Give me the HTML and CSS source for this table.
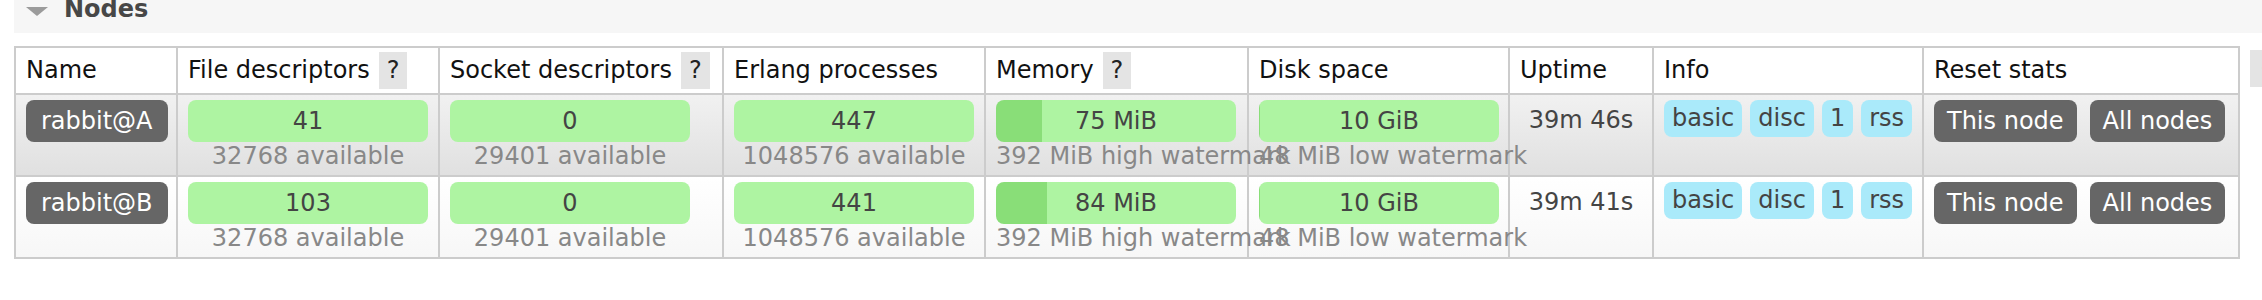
FILE: index.html
```html
<!DOCTYPE html>
<html>
<head>
<meta charset="utf-8">
<title>Nodes</title>
<link rel="stylesheet" href="styles.css">
</head>
<body>
<div class="page">
  <div class="section-head">
    <svg class="tri" width="22" height="9" viewBox="0 0 22 9"><polygon points="0,0 22,0 11,9" fill="#9b9b9b"/></svg>
    <h2>Nodes</h2>
  </div>
  <div class="table-row">
    <table class="list">
      <colgroup>
        <col class="c-name"><col class="c-fd"><col class="c-sd"><col class="c-ep"><col class="c-mem"><col class="c-disk"><col class="c-up"><col class="c-info"><col class="c-reset">
      </colgroup>
      <thead>
        <tr>
          <th>Name</th>
          <th>File descriptors<span class="help">?</span></th>
          <th>Socket descriptors<span class="help">?</span></th>
          <th>Erlang processes</th>
          <th>Memory<span class="help">?</span></th>
          <th>Disk space</th>
          <th>Uptime</th>
          <th>Info</th>
          <th>Reset stats</th>
        </tr>
      </thead>
      <tbody>
        <tr class="alt1">
          <td><span class="node">rabbit@A</span></td>
          <td><div class="meter"><div class="bar" style="--fill:0%">41</div><div class="sub">32768 available</div></div></td>
          <td><div class="meter"><div class="bar" style="--fill:0%">0</div><div class="sub">29401 available</div></div></td>
          <td><div class="meter"><div class="bar" style="--fill:0%">447</div><div class="sub">1048576 available</div></div></td>
          <td><div class="meter"><div class="bar" style="--fill:19.1%">75 MiB</div><div class="sub">392 MiB high watermark</div></div></td>
          <td><div class="meter"><div class="bar" style="--fill:0.5%">10 GiB</div><div class="sub">48 MiB low watermark</div></div></td>
          <td class="uptime">39m 46s</td>
          <td><div class="tags"><span class="tag">basic</span><span class="tag">disc</span><span class="tag">1</span><span class="tag">rss</span></div></td>
          <td><div class="btns"><span class="btn">This node</span><span class="btn">All nodes</span></div></td>
        </tr>
        <tr class="alt2">
          <td><span class="node">rabbit@B</span></td>
          <td><div class="meter"><div class="bar" style="--fill:0%">103</div><div class="sub">32768 available</div></div></td>
          <td><div class="meter"><div class="bar" style="--fill:0%">0</div><div class="sub">29401 available</div></div></td>
          <td><div class="meter"><div class="bar" style="--fill:0%">441</div><div class="sub">1048576 available</div></div></td>
          <td><div class="meter"><div class="bar" style="--fill:21.4%">84 MiB</div><div class="sub">392 MiB high watermark</div></div></td>
          <td><div class="meter"><div class="bar" style="--fill:0.5%">10 GiB</div><div class="sub">48 MiB low watermark</div></div></td>
          <td class="uptime">39m 41s</td>
          <td><div class="tags"><span class="tag">basic</span><span class="tag">disc</span><span class="tag">1</span><span class="tag">rss</span></div></td>
          <td><div class="btns"><span class="btn">This node</span><span class="btn">All nodes</span></div></td>
        </tr>
      </tbody>
    </table>
    <span class="plus-minus">+/-</span>
  </div>
</div>
</body>
</html>
```
FILE: styles.css
```css
* { box-sizing: border-box; }
html, body { margin: 0; padding: 0; }
body {
  font-family: "DejaVu Sans", Verdana, sans-serif;
  font-size: 24px;
  color: #111;
  background: #fff;
  overflow: hidden;
}
.page {
  margin-top: -15px;
  padding-left: 14px;
}
.section-head {
  display: flex;
  align-items: flex-start;
  gap: 16px;
  background: #f6f6f6;
  padding: 10px 12px;
  line-height: 28px;
}
.tri { margin-top: 12px; flex-shrink: 0; }
.section-head h2 {
  margin: 0;
  font-size: 24px;
  font-weight: bold;
  color: #474747;
}
.table-row {
  display: flex;
  align-items: flex-start;
  margin-top: 13px;
}
table.list {
  border-collapse: collapse;
  table-layout: fixed;
  width: 2226px;
  flex-shrink: 0;
}
.c-name { width: 162px; }
.c-fd { width: 262px; }
.c-sd { width: 284px; }
.c-ep { width: 262px; }
.c-mem { width: 263px; }
.c-disk { width: 261px; }
.c-up { width: 144px; }
.c-info { width: 270px; }
.c-reset { width: 316px; }
.list th, .list td {
  border: 2px solid #cccccc;
  padding: 5px 10px 4px;
  vertical-align: top;
  text-align: left;
  white-space: nowrap;
}
.list th {
  padding: 4px 10px;
  line-height: 37px;
  font-weight: normal;
  background: #fff;
  color: #111;
}
.help {
  display: inline-block;
  vertical-align: top;
  height: 37px;
  line-height: 37px;
  padding: 0 8px;
  margin-left: 9px;
  background: #e4e4e4;
  color: #222;
}
tr.alt1 td { background: linear-gradient(#f1f1f1, #e0e0e0); }
tr.alt2 td { background: linear-gradient(#ffffff, #f7f7f7); }
.meter {
  width: 240px;
  text-align: center;
}
.bar {
  height: 42px;
  line-height: 42px;
  border-radius: 8px;
  color: #444;
  background: linear-gradient(to right, #89de78 var(--fill), #aef4a2 var(--fill));
}
.sub {
  line-height: 29px;
  color: #888;
}
.node {
  display: inline-block;
  background: #666;
  color: #fff;
  border-radius: 8px;
  padding: 0 15px;
  line-height: 42px;
}
.uptime {
  text-align: center !important;
  line-height: 40px;
  color: #444;
}
.tags {
  display: flex;
  gap: 8px;
}
.tag {
  background: #aaeafa;
  color: #444;
  border-radius: 8px;
  padding: 0 8px;
  line-height: 37px;
}
.btns {
  display: flex;
  gap: 13px;
}
.btn {
  background: #666;
  color: #fff;
  border-radius: 8px;
  padding: 0 13px;
  line-height: 42px;
}
.plus-minus {
  flex-shrink: 0;
  margin-left: 10px;
  margin-top: 4px;
  height: 37px;
  line-height: 37px;
  padding: 0 10px;
  background: #e4e4e4;
  color: #222;
  white-space: nowrap;
}
```
